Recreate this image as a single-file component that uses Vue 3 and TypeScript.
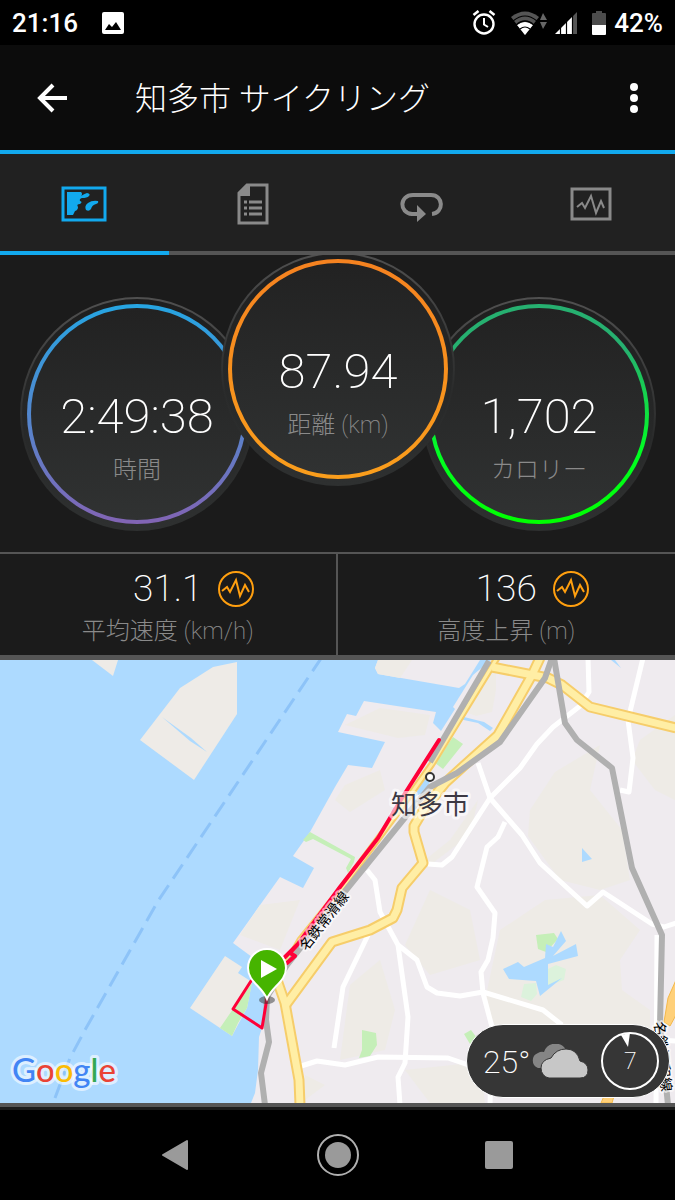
<script setup lang="ts">
import { ref } from 'vue'

interface Dial {
  id: string
  value: string
  label: string
}

interface Stat {
  value: string
  label: string
}

interface Tab {
  id: string
  name: string
}

const dials: Dial[] = [
  { id: 'time', value: '2:49:38', label: '時間' },
  { id: 'distance', value: '87.94', label: '距離 (km)' },
  { id: 'calories', value: '1,702', label: 'カロリー' },
]

const stats: Stat[] = [
  { value: '31.1', label: '平均速度 (km/h)' },
  { value: '136', label: '高度上昇 (m)' },
]

const tabs: Tab[] = [
  { id: 'map', name: 'マップ' },
  { id: 'details', name: '詳細' },
  { id: 'laps', name: 'ラップ' },
  { id: 'charts', name: 'グラフ' },
]

const activeTab = ref('map')

const majorRoads: string[] = [
  'M540 658 L532 675 L498 735 L468 762 L445 783 L424 809 L414 826 L414 832 L423 863 L402 888 L397 910 L393 918 L370 930 L332 942 L285 1006',
  'M492 667 L548 678 L562 685 L590 707 L676 728',
  'M277 980 L285 1003 L299 1080 L300 1105',
]

const minorRoads: string[] = [
  'M588 658 L589 692 L580 706 L553 727 L537 744 L520 768 L490 798 L452 857 L442 865 L428 864',
  'M643 658 L628 720 L633 758 L629 792 L620 790',
  'M478 763 L490 798 L522 835 L540 863 L587 906 L603 892 L652 924 L664 927 L676 923',
  'M505 822 L498 837 L487 847 L477 887 L495 913 L493 938 L488 960 L481 972 L483 993 L492 1027 L490 1105',
  'M367 870 L375 880 L380 912 L398 945 L408 1017 L405 1063 L398 1077 L400 1105',
  'M398 945 L417 960 L427 987 L437 993 L460 996 L483 992 L543 1010 L562 1025',
  'M369 933 L343 987 L334 1048',
  'M298 1067 L317 1061 L345 1065 L378 1057 L448 1058 L480 1069',
  'M657 935 L656 1105',
  'M660 1040 L676 1041',
]

const railways: string[] = [
  'M489 661 L430 762',
  'M552 658 L545 678 L500 742 L457 773 L430 787 L407 815 L342 895 L287 965 L267 997 L266 1020 L269 1042 L261 1073 L265 1105',
  'M554 658 L565 723 L577 740 L612 768 L632 868 L662 935 L660 1025 L668 1105',
]

const sand: string[] = [
  'M496 662 L470 690 L458 709 L476 716 L492 712 L496 690 Z',
  'M600 745 L555 772 L530 810 L528 836 L560 880 L600 890 L630 880 L622 830 L590 790 Z',
  'M640 740 L675 715 L675 800 L655 790 L632 760 Z',
  'M545 900 L600 895 L640 930 L620 960 L622 990 L650 1010 L650 1060 L500 1040 L485 1000 L500 930 Z',
  'M430 890 L470 910 L480 960 L430 975 L405 945 Z',
  'M350 985 L380 960 L395 1010 L385 1050 L340 1060 Z',
  'M345 725 L380 708 L430 715 L425 735 L398 738 Z',
  'M345 785 L380 770 L385 790 L350 812 L335 800 Z',
  'M260 905 L300 900 L280 950 L240 935 Z',
  'M405 1070 L480 1062 L485 1103 L430 1103 Z',
  'M400 880 L430 865 L470 835 L478 800 L450 840 Z',
  'M305 1075 L325 1085 L305 1100 Z',
]
</script>

<template>
  <div class="screen">
    <div class="status">
      <span>21:16</span>
      <svg class="status-photo" width="22" height="22" viewBox="0 0 22 22" aria-hidden="true">
        <rect width="22" height="22" rx="2" fill="#fff" />
        <path d="M3 18 L7 12 L10 15 L14 10 L19 18 Z" fill="#000" />
      </svg>
      <div class="status-right">
        <svg width="24" height="26" viewBox="0 0 24 26" fill="none" stroke="#fff" aria-hidden="true">
          <circle cx="12" cy="14" r="9.5" stroke-width="2.4" />
          <path d="M12 8 V14.500 L16 17" stroke-width="2" />
          <path d="M1.500 5 L6.500 1 M22.500 5 L17.500 1" stroke-width="2.6" />
        </svg>
        <svg class="wifi" width="36" height="24" viewBox="0 0 36 24" aria-hidden="true">
          <path d="M14 24 L0 6 Q14 -5 28 6 Z" fill="#555" />
          <path d="M14 24 L6 14 Q14 8 22 14 Z" fill="#fff" />
          <path d="M2 10 Q14 0 26 10 M5 14 Q14 6 23 14 M9 18 Q14 14 19 18" fill="none" stroke="#000" stroke-width="1.2" />
          <path d="M29 9 L32 2 L36 9 Z M29 11 L36 11 L32 18 Z" fill="#666" />
        </svg>
        <svg class="signal" width="22" height="22" viewBox="0 0 22 22" aria-hidden="true">
          <path d="M0 22 L18 4 V22 Z" fill="#fff" />
          <path d="M18 4 L22 0 V22 H18 Z" fill="#555" />
          <path d="M5.500 0 V22 M11.500 0 V22 M17.500 0 V22" stroke="#000" stroke-width="1.2" />
        </svg>
        <svg width="14" height="26" viewBox="0 0 14 26" aria-hidden="true">
          <path d="M4 1 H10 V3 H13 Q14 3 14 4 V15 H0 V4 Q0 3 1 3 H4 Z" fill="#4c4c4c" />
          <path d="M0 15 H14 V24 Q14 25 13 25 H1 Q0 25 0 24 Z" fill="#fff" />
        </svg>
        <span>42%</span>
      </div>
    </div>

    <header class="appbar">
      <button type="button" class="icon-button" aria-label="戻る">
        <svg width="32" height="30" viewBox="0 0 32 30" fill="none" stroke="#fff" stroke-width="4" aria-hidden="true">
          <path d="M31 15 H4 M17 2 L4 15 L17 28" />
        </svg>
      </button>
      <h1>知多市 サイクリング</h1>
      <button type="button" class="icon-button more" aria-label="その他">
        <svg width="8" height="32" viewBox="0 0 8 32" fill="#fff" aria-hidden="true">
          <circle cx="4" cy="5" r="4" /><circle cx="4" cy="16" r="4" /><circle cx="4" cy="27" r="4" />
        </svg>
      </button>
    </header>

    <nav class="tabs">
      <button
        v-for="tab in tabs"
        :key="tab.id"
        type="button"
        class="tab"
        :class="{ active: tab.id === activeTab }"
        :aria-label="tab.name"
        @click="activeTab = tab.id"
      >
        <svg v-if="tab.id === 'map'" width="46" height="36" viewBox="0 0 46 36" aria-hidden="true">
          <rect x="2" y="2" width="42" height="32" fill="none" stroke="currentColor" stroke-width="3" />
          <path d="M6 6 H20 Q22 8 20 10 Q23 8 26 7 Q30 8 28 10 Q26 12 21 12 Q18 13 19 15 Q22 16 19 18 Q15 18 17 21 Q17 24 14 25 L12 29 H6 Z" fill="currentColor" />
          <path d="M25 24 Q23 20 27 17 Q31 14 37 15 Q38 17 35 18 Q31 19 30 23 Q28 26 25 24 Z" fill="currentColor" />
        </svg>
        <svg v-else-if="tab.id === 'details'" width="32" height="42" viewBox="0 0 32 42" aria-hidden="true">
          <path d="M2 10 L10 2 H30 V40 H2 Z" fill="none" stroke="currentColor" stroke-width="3" />
          <path d="M1 10 L10 1 H13 V13 H1 Z" fill="currentColor" />
          <path d="M12 19 H25 M12 25 H25 M12 31 H25" stroke="currentColor" stroke-width="3" />
          <path d="M7 19 H10 M7 25 H10 M7 31 H10" stroke="currentColor" stroke-width="3" />
        </svg>
        <svg v-else-if="tab.id === 'laps'" width="44" height="36" viewBox="0 0 44 36" aria-hidden="true">
          <path d="M18 28 H12 C-1 27 -1 9 13 9 H31 C44 9 44 27 32 28" fill="none" stroke="currentColor" stroke-width="4" />
          <path d="M17 19 L26 28 L17 36 Z" fill="currentColor" />
        </svg>
        <svg v-else width="42" height="34" viewBox="0 0 42 34" fill="none" stroke="currentColor" aria-hidden="true">
          <rect x="2" y="2" width="38" height="30" stroke-width="3" />
          <path d="M7 20 L12 16 L15 21 L21 9 L26 26 L31 14 L34 21" stroke-width="2" />
        </svg>
      </button>
    </nav>

    <section class="dials">
      <div v-for="dial in dials" :key="dial.id" class="dial" :class="dial.id">
        <div class="ring">
          <span class="dial-value">{{ dial.value }}</span>
          <span class="dial-label">{{ dial.label }}</span>
        </div>
      </div>
    </section>

    <section class="stats">
      <div v-for="stat in stats" :key="stat.label" class="stat">
        <div class="stat-row">
          <span class="stat-value">{{ stat.value }}</span>
          <button type="button" class="chart-button" :aria-label="stat.label">
            <svg width="36" height="36" viewBox="0 0 36 36" fill="none" stroke="#ff9f0f" stroke-width="2" aria-hidden="true">
              <circle cx="18" cy="18" r="17" />
              <path d="M4 20 L9 16 L12 21 L18 9 L22 25 L27 14 L31 21" />
            </svg>
          </button>
        </div>
        <span class="stat-label">{{ stat.label }}</span>
      </div>
    </section>

    <main class="map">
      <svg class="map-canvas" viewBox="0 660 675 443" preserveAspectRatio="xMidYMid slice" aria-label="ルートマップ">
        <rect x="0" y="660" width="675" height="443" fill="#addaff" />
        <g fill="#eeebe7">
          <path d="M92 660 H118 L113 676 Z" />
          <path d="M140 740 L180 688 L213 667 L237 662 V714 L194 780 Z" />
          <path d="M225 956 L242 967 L238 973 L252 982 L247 1008 L232 1036 L190 1008 Z" />
        </g>
        <path d="M162 717 L191 738 L207 752 L190 741 Z" fill="#addaff" />
        <path
          d="M378 660 L375 668 L378 674 L459 688 L465 684 L480 660 Z M491 660 H675 V1103 H251 L255 1093 L258 1070 L259 1037 L262 1028 L267 1000 L265 965 L252 957 L233 943 L280 877 L303 888 L314 868 L293 856 L310 832 L335 787 L348 765 L372 768 L385 742 L338 732 L347 714 L356 716 L364 701 L436 712 L433 723 L441 731 L455 709 L453 707 L473 675 Z"
          fill="#efebef"
        />
        <path d="M378 660 L375 668 L378 674 L400 678 L412 660 Z" fill="#eeebe6" />
        <path v-for="d in sand" :key="d" :d="d" fill="#eeebe6" />
        <g fill="#addaff">
          <path d="M460 716 L484 722 L493 728 L490 731 L478 723 L459 719 Z" />
          <path d="M582 848 L592 859 L582 862 Z" />
          <path d="M611 660 H615 L621 668 Z" />
          <path d="M426 775 L414 797 L424 792 L430 782 Z" />
        </g>
        <g fill="#c5efb8">
          <path d="M453 737 L463 744 L443 769 L435 763 Z" />
          <path d="M252 983 L247 1008 L238 1023 L232 1036 L220 1028 L233 1009 Z" />
          <path d="M310 832 L355 857 L354 862 L348 873 L346 868 L351 859 L313 839 L306 842 L303 840 Z" />
          <path d="M362 1030 L376 1033 L377 1045 L370 1056 L359 1058 L362 1050 Z" />
          <path d="M536 935 L554 933 L558 939 L546 952 L538 949 Z" />
          <path d="M464 1034 L471 1030 L477 1038 L470 1044 Z" />
        </g>
        <g fill="#dcf2dc">
          <path d="M548 969 L556 965 L566 969 L564 980 L548 986 Z" />
          <path d="M524 984 L536 983 L537 994 L531 1001 L521 997 Z" />
        </g>
        <path
          d="M503 969 L518 962 L524 967 L545 958 L546 944 L553 947 L561 931 L566 941 L553 956 L576 944 L578 956 L548 964 L548 985 L562 978 L540 996 L536 981 L509 979 Z"
          fill="#addaff"
        />
        <path d="M322 657 L158 901 L85 1030 L70 1058 L55 1098" fill="none" stroke="#8dc3f8" stroke-width="3" stroke-dasharray="17 8" />

        <g fill="none" stroke-linejoin="round">
          <path v-for="d in minorRoads" :key="d" :d="d" stroke="#fff" stroke-width="5" />
          <path d="M497 658 L432 764 L398 812 L338 893 L300 940 L277 980" stroke="#f6cd6a" stroke-width="7" />
          <path v-for="d in majorRoads" :key="'edge' + d" :d="d" stroke="#f6cd6a" stroke-width="11" />
          <path d="M497 658 L432 764 L398 812 L338 893 L300 940 L277 980" stroke="#ffeea5" stroke-width="3" />
          <path v-for="d in majorRoads" :key="'fill' + d" :d="d" stroke="#ffeea5" stroke-width="7" />
          <path v-for="d in railways" :key="d" :d="d" stroke="#b0b0b0" stroke-width="6" />
        </g>
        <path d="M676 980 L668 998 L664 1022 L670 1026 L676 1015 Z M601 1103 L604 1096 H614 L612 1103 Z" fill="#ffd079" stroke="#f3b849" />

        <g fill="none" stroke="#ff0038" stroke-width="4" stroke-linecap="round" stroke-linejoin="round">
          <path d="M439 740 L402 798 L378 838 L340 887 L298 944 L285 957 M298 944 L290 953 L295 956 L287 963" stroke-width="4" />
          <path d="M267 998 L262 1028 L233 1009 L251 981" stroke-width="3" />
        </g>

        <g class="map-label">
          <text class="rail-label" transform="translate(328 924) rotate(-52)" text-anchor="middle">名鉄常滑線</text>
          <text class="rail-label" transform="translate(658 1057) rotate(84)" text-anchor="middle">名鉄河和線</text>
          <circle cx="430" cy="777" r="4" fill="#fff" stroke="#333" stroke-width="2" />
          <text class="city-label" x="430" y="814" text-anchor="middle">知多市</text>
        </g>

        <ellipse cx="267" cy="1000" rx="8" ry="4" fill="#333" opacity="0.5" />
        <path d="M267 999 C262 986 248 982 248 968 A19 19 0 0 1 286 968 C286 982 272 986 267 999 Z" fill="#46b400" stroke="#fff" stroke-width="2" />
        <path d="M261 960 L277 969 L261 978 Z" fill="#fff" />

        <text class="google" x="12" y="1082">
          <tspan fill="#4285f4">G</tspan><tspan fill="#ea4335">o</tspan><tspan fill="#fbbc05">o</tspan><tspan fill="#4285f4">g</tspan><tspan fill="#34a853">l</tspan><tspan fill="#ea4335">e</tspan>
        </text>
      </svg>

      <div class="weather">
        <span class="temperature">25°</span>
        <svg width="58" height="34" viewBox="0 0 58 34" aria-hidden="true">
          <path d="M8 24 A8 8 0 0 1 8 9 Q11 7 14 8 A12 12 0 0 1 36 6 L26 24 Z" fill="#858585" />
          <path d="M19 34 A9 10 0 0 1 11 24 Q11 16 21 14 Q26 5 36 5 Q47 5 50 17 Q58 19 58 26 Q58 34 50 34 Z" fill="#c7c7c7" stroke="#363636" stroke-width="1" />
        </svg>
        <div class="wind">
          <svg width="60" height="60" viewBox="0 0 60 60" aria-hidden="true">
            <circle cx="30" cy="30" r="28" fill="none" stroke="#fff" stroke-width="2" />
            <path d="M21 4 L30 2 L28 16 Z" fill="#fff" />
          </svg>
          <span>7</span>
        </div>
      </div>
    </main>

    <footer class="navbar">
      <button type="button" aria-label="戻る">
        <svg width="30" height="32" viewBox="0 0 30 32" aria-hidden="true">
          <path d="M1 16 L25 2 V30 Z" fill="#9a9a9a" stroke="#9a9a9a" stroke-width="2" stroke-linejoin="round" />
        </svg>
      </button>
      <button type="button" aria-label="ホーム">
        <svg width="42" height="42" viewBox="0 0 42 42" aria-hidden="true">
          <circle cx="21" cy="21" r="20" fill="none" stroke="#b0b0b0" stroke-width="2" />
          <circle cx="21" cy="21" r="13" fill="#9a9a9a" />
        </svg>
      </button>
      <button type="button" aria-label="アプリ履歴">
        <svg width="28" height="28" viewBox="0 0 28 28" aria-hidden="true">
          <rect width="28" height="28" rx="2" fill="#9a9a9a" />
        </svg>
      </button>
    </footer>
  </div>
</template>

<style>
body {
  margin: 0;
  background: #000;
}
</style>

<style scoped>
.screen {
  display: flex;
  flex-direction: column;
  min-height: 100vh;
  background: #1b1b1b;
  color: #fff;
  font-family: Roboto, "Noto Sans CJK JP", sans-serif;
  font-weight: 200;
}

button {
  display: flex;
  align-items: center;
  justify-content: center;
  padding: 0;
  border: 0;
  background: none;
  color: inherit;
  cursor: pointer;
}

svg {
  display: block;
  flex: none;
}

.status {
  display: flex;
  align-items: center;
  height: 45px;
  padding: 0 12px;
  background: #000;
  font-size: 26px;
  font-weight: 500;
}

.status-photo {
  margin-left: 24px;
}

.status-right {
  display: flex;
  align-items: center;
  gap: 8px;
  margin-left: auto;
}

.wifi {
  margin-left: 7px;
}

.signal {
  margin-right: 7px;
}

.appbar {
  display: flex;
  align-items: center;
  height: 105px;
  background: #0c0c0c;
  border-bottom: 4px solid #12a9ee;
}

.icon-button {
  width: 104px;
  height: 100%;
}

.more {
  width: 83px;
}

h1 {
  flex: 1;
  margin: 0;
  padding: 2px 0 0 31px;
  font-size: 32px;
  font-weight: 200;
  line-height: 40px;
}

.tabs {
  display: grid;
  grid-template-columns: repeat(4, 1fr);
  height: 101px;
  background: #212121;
}

.tab {
  padding-top: 2px;
  border-bottom: 4px solid #555;
  color: #8a8a8a;
}

.tab.active {
  border-color: #12a9ee;
  color: #12a9ee;
}

.dials {
  display: flex;
  justify-content: center;
  height: 297px;
  overflow: hidden;
}

.dial {
  box-sizing: border-box;
  flex: none;
  width: 234px;
  height: 234px;
  margin: 42px -17px 0 -16px;
  padding: 5px;
  border: 2px solid transparent;
  border-radius: 50%;
  background:
    linear-gradient(#1e1e1e, #2e3030) padding-box,
    linear-gradient(#505050, #2a2b2b 60%, #2e3030) border-box;
}

.distance {
  z-index: 1;
  margin-top: -3px;
}

.ring {
  box-sizing: border-box;
  display: flex;
  flex-direction: column;
  align-items: center;
  width: 220px;
  height: 220px;
  padding-top: 84px;
  border: 4px solid transparent;
  border-radius: 50%;
}

.time .ring {
  background:
    linear-gradient(#222, #303232) padding-box,
    linear-gradient(#26a5e2, #5784cc 55%, #8264b4) border-box;
}

.distance .ring {
  background:
    linear-gradient(#222, #303232) padding-box,
    linear-gradient(#f58220, #fa9e1c) border-box;
}

.calories .ring {
  background:
    linear-gradient(#222, #303232) padding-box,
    linear-gradient(#26b070 20%, #0f2 68%, #0f0) border-box;
}

.dial-value {
  font-size: 49px;
  line-height: 50px;
}

.dial-label {
  margin-top: 10px;
  color: #8a8a8a;
  font-size: 24px;
  line-height: 36px;
}

.stats {
  display: grid;
  grid-template-columns: repeat(2, 1fr);
  height: 101px;
  border-top: 2px solid #555;
  border-bottom: 5px solid #555;
}

.stat {
  display: flex;
  flex-direction: column;
  align-items: center;
  padding-top: 14px;
}

.stat:first-child {
  border-right: 2px solid #555;
}

.stat-row {
  display: grid;
  grid-template-columns: 1fr auto 1fr;
  align-items: center;
  gap: 16px;
  width: 100%;
  height: 42px;
}

.stat-value {
  grid-column: 2;
  font-size: 37px;
  line-height: 42px;
}

.chart-button {
  justify-self: start;
}

.stat-label {
  margin-top: 2px;
  color: #8a8a8a;
  font-size: 24px;
  line-height: 38px;
}

.map {
  position: relative;
  flex: 1;
  min-height: 300px;
  overflow: hidden;
  border-bottom: 4px solid #555;
}

.map-canvas {
  position: absolute;
  inset: 0;
  width: 100%;
  height: 100%;
}

.map-label text {
  font-family: "Noto Sans CJK JP", sans-serif;
  paint-order: stroke;
  stroke: rgba(255, 255, 255, 0.6);
  stroke-linejoin: round;
}

.rail-label {
  fill: #000;
  font-size: 14px;
  font-weight: 400;
  stroke-width: 4px;
}

.city-label {
  fill: #3c3843;
  font-size: 26px;
  font-weight: 400;
  stroke-width: 6px;
}

.google {
  font-family: Lato, sans-serif;
  font-size: 33px;
  font-weight: 500;
  paint-order: stroke;
  stroke: rgba(255, 255, 255, 0.6);
  stroke-width: 6px;
  stroke-linejoin: round;
}

.weather {
  position: absolute;
  right: 5px;
  bottom: 5px;
  display: flex;
  align-items: center;
  box-sizing: border-box;
  width: 204px;
  height: 74px;
  padding: 0 11px 0 16px;
  border: 1px solid #fff;
  border-radius: 37px;
  background: #363636;
}

.temperature {
  flex: 1;
  padding-top: 2px;
  font-size: 32px;
}

.wind {
  display: grid;
  place-items: center;
  margin-left: 12px;
  margin-right: -1px;
  font-size: 23px;
}

.wind > * {
  grid-area: 1 / 1;
}

.navbar {
  display: flex;
  justify-content: center;
  height: 90px;
  border-top: 3px solid #1b1b1b;
  background: #000;
}

.navbar button {
  width: 161px;
}
</style>
